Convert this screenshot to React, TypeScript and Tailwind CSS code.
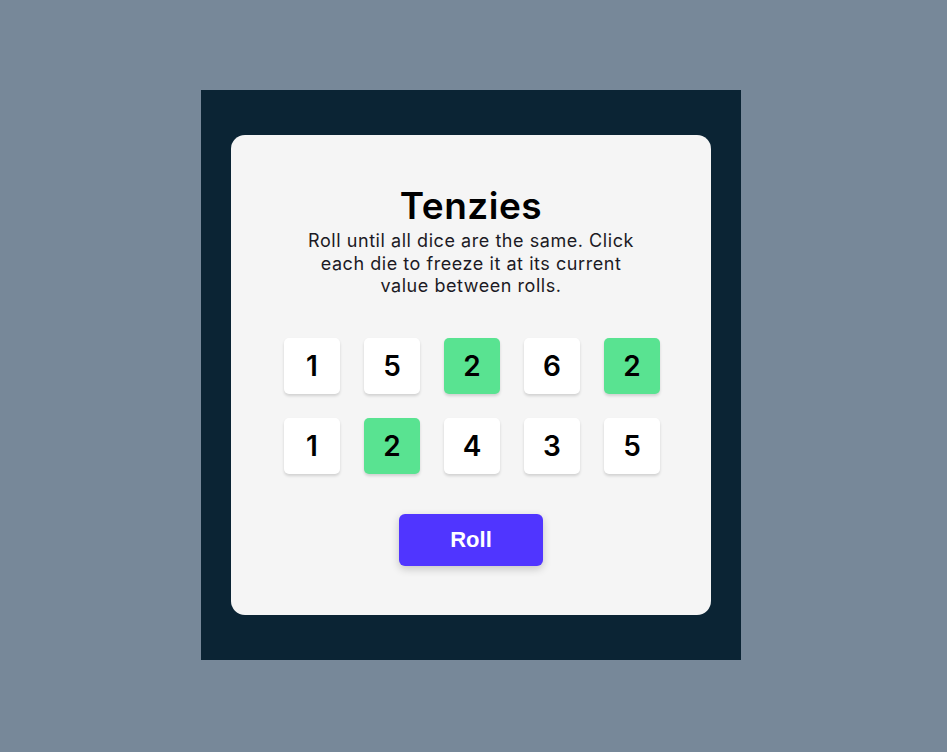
import React from "react";

const dice: { v: number; held: boolean }[] = [
  { v: 1, held: false },
  { v: 5, held: false },
  { v: 2, held: true },
  { v: 6, held: false },
  { v: 2, held: true },
  { v: 1, held: false },
  { v: 2, held: true },
  { v: 4, held: false },
  { v: 3, held: false },
  { v: 5, held: false },
];

export default function App() {
  return (
    <div className="min-h-screen w-full bg-[#778899] flex items-center justify-center">
      <div className="mr-[5px] mb-[2px] w-[540px] h-[570px] bg-[#0B2434] flex items-center justify-center">
        <main
          className="w-[480px] h-[480px] bg-[#F5F5F5] rounded-[14px] flex flex-col items-center pt-[47px]"
          style={{ fontFamily: "Inter, 'Open Sans', sans-serif" }}
        >
          <h1 className="text-[37px] leading-[48px] font-semibold text-black tracking-[0.5px]">Tenzies</h1>
          <p className="w-[345px] text-center text-[18px] leading-[22.5px] tracking-[0.55px] text-[#1c1a24] mt-[0px]">
            Roll until all dice are the same. Click each die to freeze it at its current value between rolls.
          </p>
          <div className="grid grid-cols-5 gap-x-[24px] gap-y-[24px] mt-[40px] ml-[2px]">
            {dice.map((d, i) => (
              <div
                key={i}
                className={`w-[56px] h-[56px] rounded-[5px] flex items-center justify-center text-[28px] font-semibold text-black shadow-[0_2px_3px_rgba(0,0,0,0.15)] ${
                  d.held ? "bg-[#59E391]" : "bg-white"
                }`}
              >
                {d.v}
              </div>
            ))}
          </div>
          <button
            className="mt-[40px] w-[144px] h-[52px] rounded-[6px] bg-[#5035FF] text-white text-[22px] font-bold shadow-[0_3px_8px_rgba(0,0,0,0.2)]"
            style={{ fontFamily: "'Liberation Sans', Arial, sans-serif" }}
          >
            Roll
          </button>
        </main>
      </div>
    </div>
  );
}
